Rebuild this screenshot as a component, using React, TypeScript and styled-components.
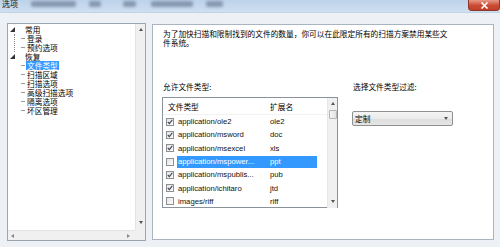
import React from "react";
import styled, { createGlobalStyle } from "styled-components";

const Global = createGlobalStyle`
  html, body { margin: 0; padding: 0; }
  body {
    width: 500px; height: 247px; overflow: hidden; background: #eaf0f6;
    font-family: "Liberation Sans", "Noto Sans CJK SC", sans-serif;
  }
  * { box-sizing: border-box; }
`;

const Window = styled.div`
  width: 500px;
  height: 247px;
  display: flex;
  flex-direction: column;
  background: #edf1f6;
  overflow: hidden;
`;

const TitleBar = styled.div`
  height: 13px;
  flex: none;
  display: flex;
  align-items: flex-start;
  padding-left: 2px;
  background: linear-gradient(#bcd2ea, #cfdff0);
  border-bottom: 1px solid #c2d2e3;
`;

const Title = styled.span`
  font-family: "Noto Sans CJK SC", sans-serif;
  font-size: 8px;
  line-height: 9px;
  margin-top: -1px;
  color: #111;
  width: 17px;
  white-space: nowrap;
`;

const Ghost = styled.span<{ $w: number; $ml: number }>`
  width: ${(p) => p.$w}px;
  margin-left: ${(p) => p.$ml}px;
  height: 6px;
  margin-top: 1px;
  border-radius: 2px;
  background: rgba(60, 78, 105, 0.45);
  filter: blur(1.4px);
`;

const CloseBtn = styled.div`
  margin-left: auto;
  width: 32px;
  height: 11px;
  display: flex;
  align-items: center;
  justify-content: center;
  background: linear-gradient(#e59a87, #cc4a34 55%, #c0412b);
  border: 1px solid #8e3526;
  border-top: none;
  border-radius: 0 0 4px 4px;
`;

const Body = styled.div`
  flex: 1;
  display: flex;
  gap: 6px;
  padding: 10px 6px 6px 7px;
`;

const TreePanel = styled.div`
  width: 139px;
  flex: none;
  background: #fff;
  border: 1px solid #9aa5b2;
  display: grid;
  grid-template-columns: 1fr 10px;
  grid-template-rows: 1fr 10px;
  overflow: hidden;
`;

const TreeList = styled.div`
  display: flex;
  flex-direction: column;
  padding-top: 1px;
  font-family: "Noto Sans CJK SC", sans-serif;
  font-size: 7.7px;
  color: #000;
`;

const TreeRow = styled.div`
  height: 9px;
  display: flex;
  align-items: center;
  white-space: nowrap;
  line-height: 9px;
`;

const Expander = styled.span`
  width: 17px;
  height: 9px;
  display: flex;
  align-items: center;
  padding-left: 2px;
  &::after {
    content: "";
    width: 0;
    height: 0;
    border-left: 5px solid transparent;
    border-bottom: 5px solid #333;
  }
`;

const Children = styled.div<{ $line: boolean }>`
  margin-left: 6px;
  border-left: 1px dotted ${(p) => (p.$line ? "#8a8a8a" : "transparent")};
`;

const Dash = styled.span`
  width: 12px;
  height: 9px;
  display: flex;
  align-items: center;
  padding-left: 6px;
  &::after {
    content: "";
    width: 4px;
    border-top: 1px solid #9a9a9a;
  }
`;

const Label = styled.span<{ $selected?: boolean }>`
  display: inline-block;
  height: 9px;
  line-height: 9px;
  padding: 0 1px;
  margin-left: -1px;
  background: ${(p) => (p.$selected ? "#3399ff" : "transparent")};
  color: ${(p) => (p.$selected ? "#fff" : "#000")};
`;

const VScroll = styled.div`
  background: #f0f0f0;
  border-left: 1px solid #e4e4e4;
  display: flex;
  flex-direction: column;
  justify-content: space-between;
  align-items: center;
  padding: 4px 0 6px;
`;

const HScroll = styled.div`
  background: #f0f0f0;
  border-top: 1px solid #e4e4e4;
  display: flex;
  justify-content: space-between;
  align-items: center;
  padding: 0 5px 0 3px;
`;

const Corner = styled.div`
  background: #f0f0f0;
`;

const Arrow = styled.span<{ $dir: "up" | "down" | "left" | "right" }>`
  width: 0;
  height: 0;
  ${(p) =>
    p.$dir === "up"
      ? "border-left: 2.5px solid transparent; border-right: 2.5px solid transparent; border-bottom: 3px solid #555;"
      : p.$dir === "down"
      ? "border-left: 2.5px solid transparent; border-right: 2.5px solid transparent; border-top: 3px solid #555;"
      : p.$dir === "left"
      ? "border-top: 2.5px solid transparent; border-bottom: 2.5px solid transparent; border-right: 3px solid #888;"
      : "border-top: 2.5px solid transparent; border-bottom: 2.5px solid transparent; border-left: 3px solid #888;"}
`;

const Panel = styled.div`
  flex: 1;
  margin: 1px 0 1px;
  background: #fff;
  border: 1px solid #a9b4c1;
  padding: 5px 11px 0 9px;
  display: flex;
  flex-direction: column;
  font-family: "Noto Sans CJK SC", sans-serif;
  font-size: 7.7px;
  color: #000;
`;

const Description = styled.p`
  margin: 0 0 0 1px;
  width: 288px;
  line-height: 8.5px;
`;

const Columns = styled.div`
  margin-top: 35px;
  display: flex;
  gap: 14px;
`;

const Column = styled.div<{ $w?: number }>`
  display: flex;
  flex-direction: column;
  width: ${(p) => (p.$w ? `${p.$w}px` : "auto")};
`;

const FieldLabel = styled.div`
  height: 9px;
  line-height: 9px;
  padding-left: 1px;
  white-space: nowrap;
`;

const ListBox = styled.div`
  margin-top: 6px;
  height: 111px;
  border: 1px solid #8a929c;
  display: grid;
  grid-template-columns: 1fr 10px;
  background: #fff;
`;

const ListBody = styled.div`
  display: flex;
  flex-direction: column;
`;

const Header = styled.div`
  height: 17px;
  display: grid;
  grid-template-columns: 105px 1fr;
  align-items: center;
  border-bottom: 1px solid #f2f2f2;
`;

const HeaderCell = styled.span<{ $pl: number }>`
  padding-left: ${(p) => p.$pl}px;
`;

const Row = styled.div`
  height: 13.3px;
  display: flex;
  align-items: center;
`;

const CheckCell = styled.span`
  width: 14px;
  padding-left: 3px;
  display: flex;
  align-items: center;
`;

const Box = styled.span`
  width: 8px;
  height: 8px;
  border: 1px solid #8f8f8f;
  background: linear-gradient(135deg, #e4e4e4, #fbfbfb);
  display: flex;
  align-items: center;
  justify-content: center;
`;

const Cells = styled.span<{ $selected?: boolean }>`
  height: 12px;
  display: grid;
  grid-template-columns: 91px 49px;
  align-items: center;
  font-family: "Liberation Sans", "Noto Sans CJK SC", sans-serif;
  font-size: 7.7px;
  background: ${(p) => (p.$selected ? "#3399ff" : "transparent")};
  color: ${(p) => (p.$selected ? "#fff" : "#111")};
`;

const NameCell = styled.span`
  padding-left: 1px;
  white-space: nowrap;
  overflow: hidden;
`;

const ExtCell = styled.span`
  padding-left: 2px;
  white-space: nowrap;
`;

const ListScroll = styled.div`
  background: #f0f0f0;
  border-left: 1px solid #e6e6e6;
  display: flex;
  flex-direction: column;
  align-items: center;
  padding: 4px 0 5px;
`;

const Thumb = styled.div`
  margin-top: 5px;
  width: 8px;
  height: 9px;
  border: 1px solid #b5b5b5;
  border-radius: 1px;
  background: linear-gradient(90deg, #f4f4f4, #e2e2e2);
`;

const Spacer = styled.div`
  flex: 1;
`;

const Select = styled.div`
  margin-top: 20px;
  width: 101px;
  height: 15px;
  border: 1px solid #8e8f8f;
  border-radius: 2px;
  background: linear-gradient(#f4f4f4, #ebebeb 50%, #dddddd 51%, #e6e6e6);
  display: flex;
  align-items: center;
  justify-content: space-between;
  padding: 0 4px 0 2px;
`;

const Close = () => (
  <svg width="9" height="7" viewBox="0 0 9 7">
    <path d="M1.5 0.5 L7.5 6.5 M7.5 0.5 L1.5 6.5" stroke="#fff" strokeWidth="1.6" />
  </svg>
);

const Check = () => (
  <svg width="6" height="6" viewBox="0 0 6 6">
    <path d="M0.8 3 L2.4 4.7 L5.3 0.9" fill="none" stroke="#3c4a5c" strokeWidth="1.1" />
  </svg>
);

const ghosts = [
  { ml: 12, w: 45 },
  { ml: 13, w: 12 },
  { ml: 22, w: 13 },
  { ml: 15, w: 42 },
  { ml: 13, w: 17 },
];

const tree = [
  { label: "常用", line: true, children: ["登录", "预约选项"] },
  {
    label: "恢复",
    line: false,
    children: ["文件类型", "扫描区域", "扫描选项", "高级扫描选项", "隔离选项", "坏区管理"],
  },
];

const files = [
  { name: "application/ole2", ext: "ole2", checked: true },
  { name: "application/msword", ext: "doc", checked: true },
  { name: "application/msexcel", ext: "xls", checked: true },
  { name: "application/mspower...", ext: "ppt", checked: false, selected: true },
  { name: "application/mspublis...", ext: "pub", checked: true },
  { name: "application/ichitaro", ext: "jtd", checked: true },
  { name: "images/riff", ext: "riff", checked: false },
];

export default function App() {
  return (
    <>
      <Global />
      <Window>
        <TitleBar>
          <Title>选项</Title>
          {ghosts.map((g, i) => (
            <Ghost key={i} $w={g.w} $ml={g.ml} />
          ))}
          <CloseBtn>
            <Close />
          </CloseBtn>
        </TitleBar>
        <Body>
          <TreePanel>
            <TreeList>
              {tree.map((g) => (
                <div key={g.label}>
                  <TreeRow>
                    <Expander />
                    <Label>{g.label}</Label>
                  </TreeRow>
                  <Children $line={g.line}>
                    {g.children.map((c) => (
                      <TreeRow key={c}>
                        <Dash />
                        <Label $selected={c === "文件类型"}>{c}</Label>
                      </TreeRow>
                    ))}
                  </Children>
                </div>
              ))}
            </TreeList>
            <VScroll>
              <Arrow $dir="up" />
              <Arrow $dir="down" />
            </VScroll>
            <HScroll>
              <Arrow $dir="left" />
              <Arrow $dir="right" />
            </HScroll>
            <Corner />
          </TreePanel>
          <Panel>
            <Description>
              为了加快扫描和限制找到的文件的数量，你可以在此限定所有的扫描方案禁用某些文件系统。
            </Description>
            <Columns>
              <Column $w={176}>
                <FieldLabel>允许文件类型:</FieldLabel>
                <ListBox>
                  <ListBody>
                    <Header>
                      <HeaderCell $pl={5}>文件类型</HeaderCell>
                      <HeaderCell $pl={2}>扩展名</HeaderCell>
                    </Header>
                    {files.map((f) => (
                      <Row key={f.name}>
                        <CheckCell>
                          <Box>{f.checked && <Check />}</Box>
                        </CheckCell>
                        <Cells $selected={f.selected}>
                          <NameCell>{f.name}</NameCell>
                          <ExtCell>{f.ext}</ExtCell>
                        </Cells>
                      </Row>
                    ))}
                  </ListBody>
                  <ListScroll>
                    <Arrow $dir="up" />
                    <Thumb />
                    <Spacer />
                    <Arrow $dir="down" />
                  </ListScroll>
                </ListBox>
              </Column>
              <Column>
                <FieldLabel>选择文件类型过滤:</FieldLabel>
                <Select>
                  <span>定制</span>
                  <Arrow $dir="down" />
                </Select>
              </Column>
            </Columns>
          </Panel>
        </Body>
      </Window>
    </>
  );
}
